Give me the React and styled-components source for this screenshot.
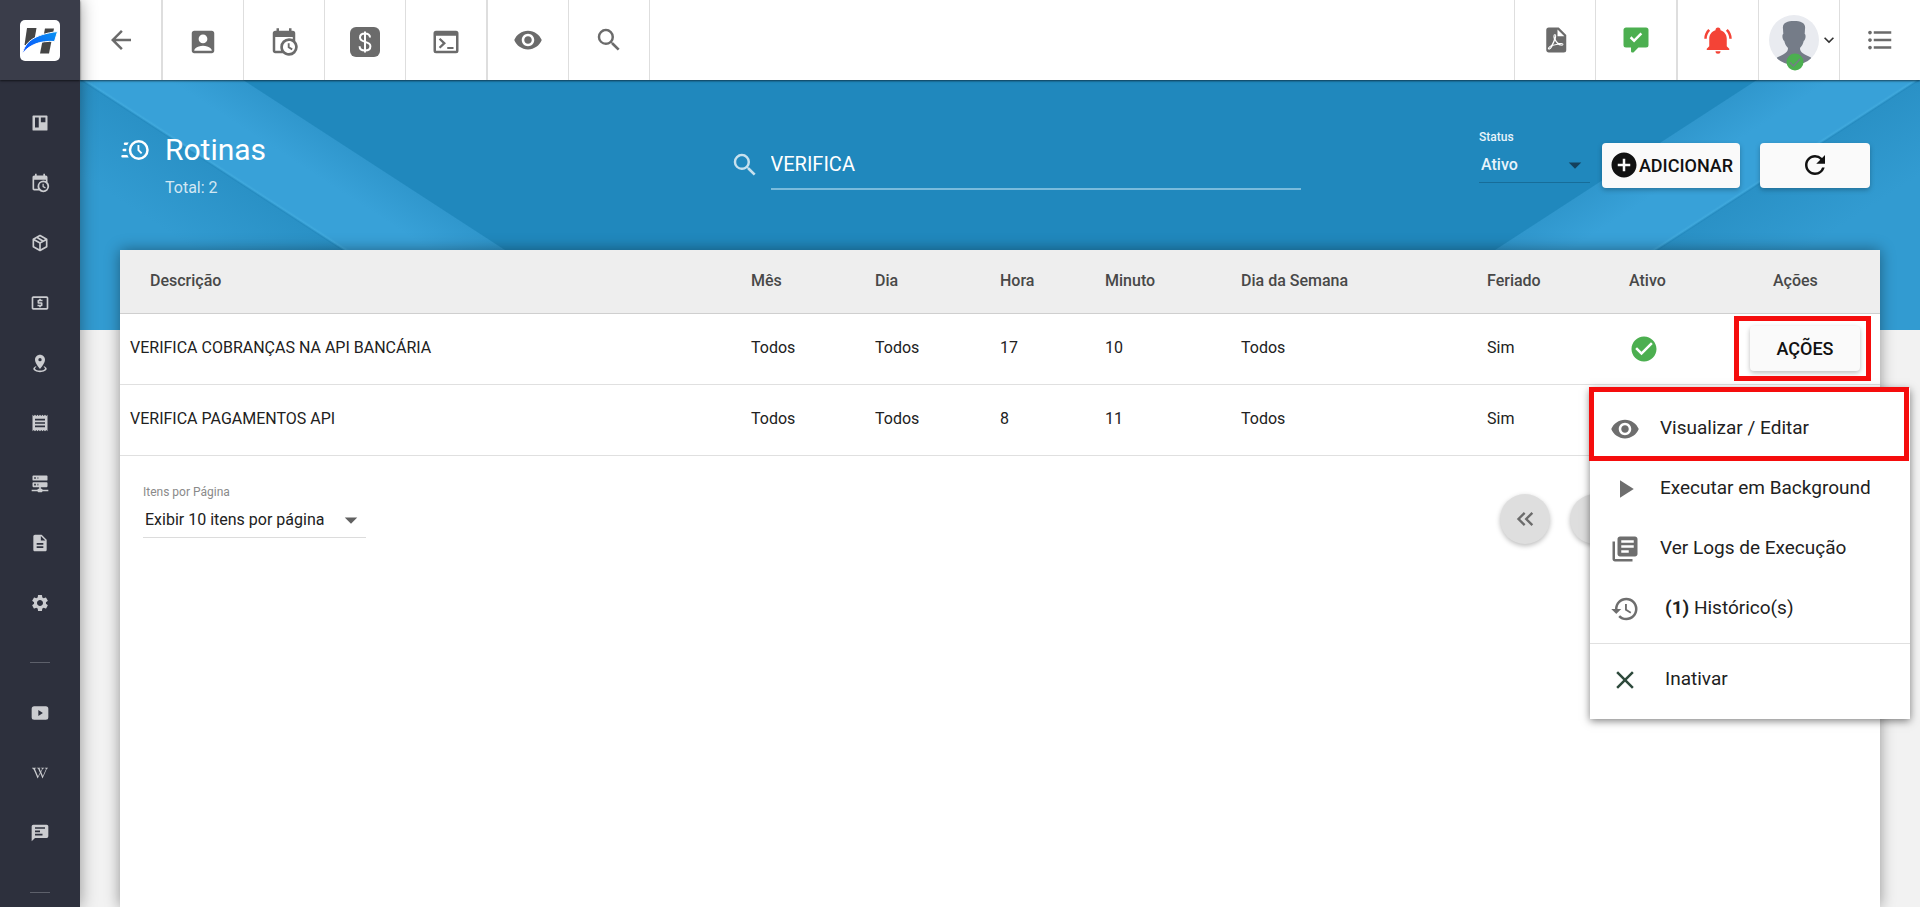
import styled, { createGlobalStyle, css } from "styled-components";
import {
  MdAccountBox,
  MdAddCircle,
  MdArrowBack,
  MdArrowDropDown,
  MdCheckCircle,
  MdClose,
  MdDescription,
  MdFormatListBulleted,
  MdHistory,
  MdKeyboardArrowDown,
  MdKeyboardDoubleArrowLeft,
  MdLibraryBooks,
  MdLocalAtm,
  MdPlayArrow,
  MdReceipt,
  MdRefresh,
  MdSearch,
  MdSettings,
  MdVisibility,
} from "react-icons/md";
import { FaWikipediaW } from "react-icons/fa";

const PATHS = {
  board:
    "M4,3H20A1,1 0 0,1 21,4V20A1,1 0 0,1 20,21H4A1,1 0 0,1 3,20V4A1,1 0 0,1 4,3M6,5.5V17.5H10.5V5.5H6M13,5.5V11H18.5V5.5H13Z",
  calendarClock:
    "M15,13H16.5V15.82L18.94,17.23L18.19,18.53L15,16.69V13M19,8H5V19H9.67C9.24,18.09 9,17.07 9,16A7,7 0 0,1 16,9C17.07,9 18.09,9.24 19,9.67V8M5,21C3.89,21 3,20.1 3,19V5C3,3.89 3.89,3 5,3H6V1H8V3H16V1H18V3H19A2,2 0 0,1 21,5V11.1C22.24,12.36 23,14.09 23,16A7,7 0 0,1 16,23C14.09,23 12.36,22.24 11.1,21H5M16,11.15A4.85,4.85 0 0,0 11.15,16C11.15,18.68 13.32,20.85 16,20.85A4.85,4.85 0 0,0 20.85,16C20.85,13.32 18.68,11.15 16,11.15Z",
  box: "M21,16.5C21,16.88 20.79,17.21 20.47,17.38L12.57,21.82C12.41,21.94 12.21,22 12,22C11.79,22 11.59,21.94 11.43,21.82L3.53,17.38C3.21,17.21 3,16.88 3,16.5V7.5C3,7.12 3.21,6.79 3.53,6.62L11.43,2.18C11.59,2.06 11.79,2 12,2C12.21,2 12.41,2.06 12.57,2.18L20.47,6.62C20.79,6.79 21,7.12 21,7.5V16.5M12,4.15L10.11,5.22L16,8.61L17.96,7.5L12,4.15M6.04,7.5L12,10.85L13.96,9.75L8.08,6.35L6.04,7.5M5,15.91L11,19.29V12.58L5,9.21V15.91M19,15.91V9.21L13,12.58V19.29L19,15.91Z",
  marker:
    "M12,2C15.31,2 18,4.66 18,7.95C18,12.41 12,19 12,19C12,19 6,12.41 6,7.95C6,4.66 8.69,2 12,2M12,6A2,2 0 0,0 10,8A2,2 0 0,0 12,10A2,2 0 0,0 14,8A2,2 0 0,0 12,6M20,19C20,21.21 16.42,23 12,23C7.58,23 4,21.21 4,19C4,17.71 5.22,16.56 7.11,15.83L7.75,16.74C6.67,17.19 6,17.81 6,18.5C6,19.88 8.69,21 12,21C15.31,21 18,19.88 18,18.5C18,17.81 17.33,17.19 16.25,16.74L16.89,15.83C18.78,16.56 20,17.71 20,19Z",
  server:
    "M13,19H14A1,1 0 0,1 15,20H22V22H15A1,1 0 0,1 14,23H10A1,1 0 0,1 9,22H2V20H9A1,1 0 0,1 10,19H11V17H4A1,1 0 0,1 3,16V12A1,1 0 0,1 4,11H20A1,1 0 0,1 21,12V16A1,1 0 0,1 20,17H13V19M4,3H20A1,1 0 0,1 21,4V8A1,1 0 0,1 20,9H4A1,1 0 0,1 3,8V4A1,1 0 0,1 4,3M9,7H10V5H9V7M9,15H10V13H9V15M5,5V7H7V5H5M5,13V15H7V13H5Z",
  video:
    "M5,4H19A3,3 0 0,1 22,7V17A3,3 0 0,1 19,20H5A3,3 0 0,1 2,17V7A3,3 0 0,1 5,4M10,8.5V15.5L15.5,12L10,8.5Z",
  message:
    "M4,2H20A2,2 0 0,1 22,4V16A2,2 0 0,1 20,18H6L2,22V4A2,2 0 0,1 4,2M6,5V7H18V5H6M6,9V11H12V9H6M6,13V15H15V13H6Z",
  clockFast:
    "M15,4A8,8 0 0,1 23,12A8,8 0 0,1 15,20A8,8 0 0,1 7,12A8,8 0 0,1 15,4M15,6A6,6 0 0,0 9,12A6,6 0 0,0 15,18A6,6 0 0,0 21,12A6,6 0 0,0 15,6M14,8H15.5V11.78L17.83,14.11L16.77,15.17L14,12.4V8M2,18A1,1 0 0,1 1,17A1,1 0 0,1 2,16H5.83C6.14,16.71 6.54,17.38 7,18H2M3,13A1,1 0 0,1 2,12A1,1 0 0,1 3,11H5.05L5,12L5.05,13H3M4,8A1,1 0 0,1 3,7A1,1 0 0,1 4,6H7C6.54,6.62 6.14,7.29 5.83,8H4Z",
  terminal:
    "M4,3H20A2,2 0 0,1 22,5V19A2,2 0 0,1 20,21H4A2,2 0 0,1 2,19V5A2,2 0 0,1 4,3M4,7V19H20V7H4M7.5,8.8L12,13L7.5,17.2L6.2,16L9.3,13L6.2,10L7.5,8.8M13,16H18V17.6H13V16Z",
  pdf: "M14,9H19.5L14,3.5V9M7,2H15L21,8V20A2,2 0 0,1 19,22H7C5.89,22 5,21.1 5,20V4A2,2 0 0,1 7,2M11.93,12.44C12.34,13.34 12.86,14.08 13.46,14.59L13.87,14.91C13,15.07 11.8,15.35 10.53,15.84V15.84L10.42,15.88L10.92,14.84C11.37,13.97 11.7,13.18 11.93,12.44M18.41,16.25C18.59,16.07 18.68,15.84 18.69,15.59C18.72,15.39 18.67,15.2 18.57,15.04C18.28,14.57 17.53,14.35 16.29,14.35L15,14.42L14.13,13.84C13.5,13.32 12.93,12.41 12.53,11.28L12.57,11.14C12.9,9.81 13.21,8.2 12.55,7.54C12.39,7.38 12.17,7.3 11.94,7.3H11.7C11.33,7.3 11,7.69 10.91,8.07C10.54,9.4 10.76,10.13 11.13,11.34V11.35C10.88,12.23 10.56,13.25 10.05,14.28L9.09,16.08L8.2,16.57C7,17.32 6.43,18.16 6.32,18.69C6.28,18.88 6.3,19.05 6.37,19.23L6.4,19.28L6.88,19.59L7.32,19.7C8.13,19.7 9.05,18.75 10.29,16.63L10.47,16.56C11.5,16.23 12.78,16 14.5,15.81C15.53,16.32 16.74,16.55 17.5,16.55C17.94,16.55 18.24,16.44 18.41,16.25M18,15.54L18.09,15.65C18.08,15.75 18.05,15.76 18,15.78H17.96L17.77,15.8C17.31,15.8 16.6,15.61 15.87,15.29C15.96,15.19 16,15.19 16.1,15.19C17.5,15.19 17.9,15.44 18,15.54M8.83,17C8.18,18.19 7.59,18.85 7.14,19C7.19,18.62 7.64,17.96 8.35,17.31L8.83,17M11.85,10.09C11.62,9.19 11.61,8.46 11.78,8.04L11.85,7.92L12,7.97C12.17,8.21 12.19,8.53 12.09,9.07L12.06,9.23L11.9,10.05L11.85,10.09Z",
  commentCheck:
    "M9,22A1,1 0 0,1 8,21V18H4A2,2 0 0,1 2,16V4C2,2.89 2.9,2 4,2H20A2,2 0 0,1 22,4V16A2,2 0 0,1 20,18H13.9L10.2,21.71C10,21.9 9.75,22 9.5,22H9M10.47,14L17,7.41L15.6,6L10.47,11.18L8.4,9.09L7,10.5L10.47,14Z",
  bellRing:
    "M21,19V20H3V19L5,17V11C5,7.9 7.03,5.17 10,4.29C10,4.19 10,4.1 10,4A2,2 0 0,1 12,2A2,2 0 0,1 14,4C14,4.1 14,4.19 14,4.29C16.97,5.17 19,7.9 19,11V17L21,19M14,21A2,2 0 0,1 12,23A2,2 0 0,1 10,21M19.75,3.19L18.33,4.61C20.04,6.3 21,8.6 21,11H23C23,8.07 21.84,5.25 19.75,3.19M1,11H3C3,8.6 3.96,6.3 5.67,4.61L4.25,3.19C2.16,5.25 1,8.07 1,11Z",
};

const Icon = ({ name, size = 30 }) => (
  <svg
    width={size}
    height={size}
    viewBox="0 0 24 24"
    fill="currentColor"
    fillRule="evenodd"
    aria-hidden="true"
  >
    <path d={PATHS[name]} />
  </svg>
);

const DollarBox = () => (
  <svg width="30" height="30" viewBox="0 0 30 30" aria-hidden="true">
    <rect width="30" height="30" rx="6" fill="currentColor" />
    <path
      d="M15 4.500v21M20 10.500c0-2.600-2-4-5-4s-5 1.500-5 4.100c0 5.800 10.400 2.800 10.400 8.600 0 2.800-2.300 4.300-5.400 4.300s-5.400-1.500-5.400-4.300"
      fill="none"
      stroke="#fff"
      strokeWidth="2"
    />
  </svg>
);

const Logo = () => (
  <svg width="40" height="41" viewBox="0 0 40 41" aria-hidden="true">
    <defs>
      <linearGradient id="swoosh" x1="0" y1="1" x2="1" y2="0">
        <stop offset="0" stopColor="#0a4fff" />
        <stop offset="1" stopColor="#0a94f0" />
      </linearGradient>
    </defs>
    <rect width="40" height="41" rx="5" fill="#fff" />
    <path d="M7 8h9.500l-3 17h-9z" fill="#454545" />
    <path d="M25 8.500h9l-5 25h-9z" fill="#454545" />
    <path
      d="M2.500 33.500C5 22 14 14.500 37.500 11.500L34.500 21.500C20 20.500 9 25 2.500 33.500z"
      fill="url(#swoosh)"
      stroke="#fff"
      strokeWidth="1"
    />
  </svg>
);

const AvatarPicture = () => (
  <svg width="50" height="56" viewBox="0 0 50 56" aria-hidden="true">
    <defs>
      <clipPath id="face">
        <circle cx="25" cy="25" r="25" />
      </clipPath>
    </defs>
    <circle cx="25" cy="25" r="25" fill="#e9ebf0" />
    <path
      d="M14 14C13 8 18 6 25 6s12 2 11 8l-.3 5c1.500.5 1 6-1 7-.5 3-2 5-3.700 7 0 5 4 6 11 9.500V52H8V42.500C15 39 19 38 19 33c-1.700-2-3.200-4-3.700-7-2-1-2.500-6.500-1-7z"
      fill="#757c88"
      clipPath="url(#face)"
    />
    <circle cx="26" cy="47" r="8.500" fill="#4caf50" />
    <path
      d="M21 47.500l3.500 3.500 6.500-7"
      fill="none"
      stroke="#757c88"
      strokeWidth="1.500"
    />
  </svg>
);

const navItems = [
  { label: "Painel", icon: <Icon name="board" size={20} /> },
  { label: "Agenda", icon: <Icon name="calendarClock" size={20} /> },
  { label: "Produtos", icon: <Icon name="box" size={20} /> },
  { label: "Financeiro", icon: <MdLocalAtm /> },
  { label: "Mapa", icon: <Icon name="marker" size={20} /> },
  { label: "Notas", icon: <MdReceipt /> },
  { label: "Servidores", icon: <Icon name="server" size={20} /> },
  { label: "Documentos", icon: <MdDescription /> },
  { label: "Configurações", icon: <MdSettings /> },
];

const helpItems = [
  { label: "Vídeos", icon: <Icon name="video" size={20} /> },
  { label: "Wiki", icon: <FaWikipediaW size={16} /> },
  { label: "Mensagens", icon: <Icon name="message" size={20} /> },
];

const rows = [
  {
    description: "VERIFICA COBRANÇAS NA API BANCÁRIA",
    month: "Todos",
    day: "Todos",
    hour: 17,
    minute: 10,
    weekday: "Todos",
    holiday: "Sim",
    open: true,
  },
  {
    description: "VERIFICA PAGAMENTOS API",
    month: "Todos",
    day: "Todos",
    hour: 8,
    minute: 11,
    weekday: "Todos",
    holiday: "Sim",
  },
];

const ActionsMenu = () => (
  <Menu role="menu">
    <MenuItem role="menuitem" $marked>
      <MdVisibility />
      <span>Visualizar / Editar</span>
    </MenuItem>
    <MenuItem role="menuitem">
      <MdPlayArrow />
      <span>Executar em Background</span>
    </MenuItem>
    <MenuItem role="menuitem">
      <MdLibraryBooks />
      <span>Ver Logs de Execução</span>
    </MenuItem>
    <MenuItem role="menuitem" $indent>
      <MdHistory />
      <span>
        <b>(1)</b> Histórico(s)
      </span>
    </MenuItem>
    <MenuDivider />
    <MenuItem role="menuitem" $indent $dark>
      <MdClose />
      <span>Inativar</span>
    </MenuItem>
  </Menu>
);

const Sidebar = () => (
  <Side>
    <LogoLink href="#" aria-label="Início">
      <Logo />
    </LogoLink>
    <Nav>
      {navItems.map((item) => (
        <NavLink key={item.label} href="#" aria-label={item.label}>
          {item.icon}
        </NavLink>
      ))}
      <NavDivider />
      {helpItems.map((item) => (
        <NavLink key={item.label} href="#" aria-label={item.label}>
          {item.icon}
        </NavLink>
      ))}
      <NavDivider />
    </Nav>
  </Side>
);

const Toolbar = () => (
  <Bar>
    <BarGroup>
      <BarButton aria-label="Voltar" $strong>
        <MdArrowBack />
      </BarButton>
    </BarGroup>
    <BarGroup $low>
      <BarButton aria-label="Clientes">
        <MdAccountBox />
      </BarButton>
      <BarButton aria-label="Agenda">
        <Icon name="calendarClock" />
      </BarButton>
      <BarButton aria-label="Financeiro">
        <DollarBox />
      </BarButton>
      <BarButton aria-label="Terminal" $strong>
        <Icon name="terminal" />
      </BarButton>
    </BarGroup>
    <BarGroup>
      <BarButton aria-label="Visualizar">
        <MdVisibility />
      </BarButton>
      <BarButton aria-label="Pesquisar">
        <MdSearch />
      </BarButton>
    </BarGroup>
    <BarGroup $end>
      <BarButton aria-label="Relatórios">
        <Icon name="pdf" />
      </BarButton>
      <BarButton aria-label="Tarefas" $color="#4caf50" $strong>
        <Icon name="commentCheck" />
      </BarButton>
      <BarButton aria-label="Notificações" $color="#f44336">
        <Icon name="bellRing" />
      </BarButton>
      <BarButton aria-label="Usuário" $user>
        <AvatarPicture />
        <MdKeyboardArrowDown />
      </BarButton>
      <BarButton aria-label="Menu" $last>
        <MdFormatListBulleted />
      </BarButton>
    </BarGroup>
  </Bar>
);

const App = () => {
  return (
    <>
      <GlobalStyle />
      <Page>
        <Sidebar />
        <Main>
          <Toolbar />
          <Content>
            <Header>
              <Title>
                <Icon name="clockFast" />
                <div>
                  <h1>Rotinas</h1>
                  <p>Total: 2</p>
                </div>
              </Title>
              <Search>
                <MdSearch />
                <input aria-label="Pesquisar" defaultValue="VERIFICA" />
              </Search>
              <Filters>
                <StatusField>
                  <label htmlFor="status">Status</label>
                  <SelectBox>
                    <select id="status">
                      <option>Ativo</option>
                      <option>Inativo</option>
                    </select>
                    <MdArrowDropDown />
                  </SelectBox>
                </StatusField>
                <Button $wide>
                  <MdAddCircle />
                  ADICIONAR
                </Button>
                <Button aria-label="Atualizar">
                  <MdRefresh />
                </Button>
              </Filters>
            </Header>
            <Card>
              <Table>
                <colgroup>
                  <col />
                  <col width="124" />
                  <col width="125" />
                  <col width="105" />
                  <col width="136" />
                  <col width="246" />
                  <col width="142" />
                  <col width="121" />
                  <col width="140" />
                </colgroup>
                <thead>
                  <tr>
                    <th>Descrição</th>
                    <th>Mês</th>
                    <th>Dia</th>
                    <th>Hora</th>
                    <th>Minuto</th>
                    <th>Dia da Semana</th>
                    <th>Feriado</th>
                    <th>Ativo</th>
                    <th>Ações</th>
                  </tr>
                </thead>
                <tbody>
                  {rows.map((row) => (
                    <tr key={row.description}>
                      <td>{row.description}</td>
                      <td>{row.month}</td>
                      <td>{row.day}</td>
                      <td>{row.hour}</td>
                      <td>{row.minute}</td>
                      <td>{row.weekday}</td>
                      <td>{row.holiday}</td>
                      <td className="active">
                        <MdCheckCircle />
                      </td>
                      <td>
                        {row.open && (
                          <Actions>
                            <Button>AÇÕES</Button>
                            <Marker />
                            <ActionsMenu />
                          </Actions>
                        )}
                      </td>
                    </tr>
                  ))}
                </tbody>
              </Table>
              <Footer>
                <PerPage>
                  <label htmlFor="per-page">Itens por Página</label>
                  <SelectBox>
                    <select id="per-page">
                      <option>Exibir 10 itens por página</option>
                      <option>Exibir 25 itens por página</option>
                    </select>
                    <MdArrowDropDown />
                  </SelectBox>
                </PerPage>
                <Pager>
                  <button aria-label="Primeira página">
                    <MdKeyboardDoubleArrowLeft />
                  </button>
                  <button aria-label="Página anterior" />
                  <button aria-label="Página atual" />
                  <button aria-label="Próxima página" />
                  <button aria-label="Última página" />
                </Pager>
              </Footer>
            </Card>
          </Content>
        </Main>
      </Page>
    </>
  );
};

export default App;

const GlobalStyle = createGlobalStyle`
  * {
    box-sizing: border-box;
  }
  body {
    margin: 0;
    font-family: Roboto, "Liberation Sans", sans-serif;
    font-size: 16px;
    color: #212121;
    background-color: #f2f2f2;
  }
  button, input, select {
    font-family: inherit;
    font-size: inherit;
    color: inherit;
  }
  button {
    cursor: pointer;
  }
`;

const Page = styled.div`
  display: flex;
  height: 100vh;
  overflow: hidden;
`;

const Side = styled.aside`
  position: relative;
  z-index: 3;
  flex: none;
  width: 80px;
  background-color: #2d303d;
  box-shadow: 0 0 16px rgba(0, 0, 0, 0.4);
`;

const LogoLink = styled.a`
  display: flex;
  align-items: center;
  justify-content: center;
  height: 80px;
  background-color: #3a3d4a;
  box-shadow: 0 1px 2px rgba(0, 0, 0, 0.6);
`;

const Nav = styled.nav`
  display: flex;
  flex-direction: column;
  padding-top: 13px;
`;

const NavLink = styled.a`
  display: flex;
  align-items: center;
  justify-content: center;
  height: 60px;
  color: #cbccd0;
  font-size: 20px;
`;

const NavDivider = styled.hr`
  width: 20px;
  height: 1px;
  margin: 29px auto 20px;
  border: 0;
  background-color: #5d606b;
`;

const Main = styled.main`
  display: flex;
  flex: 1;
  flex-direction: column;
  min-width: 0;
`;

const Bar = styled.header`
  position: relative;
  z-index: 2;
  display: flex;
  flex: none;
  height: 80px;
  padding-left: 1px;
  background-color: #fff;
  box-shadow: 0 1px 2px rgba(0, 0, 0, 0.6);
`;

const BarButton = styled.button`
  display: flex;
  align-items: center;
  justify-content: center;
  width: ${(props) => (props.$strong ? "82px" : "81px")};
  padding: 0;
  border: 0;
  border-right: ${(props) => (props.$strong ? "2px" : "1px")} solid #dedede;
  background: none;
  color: ${(props) => props.$color || "#6b6b6b"};
  font-size: 30px;
  ${(props) =>
    props.$last &&
    css`
      width: 80px;
      border-right: 0;
    `}
  ${(props) =>
    props.$user &&
    css`
      padding-top: 6px;
      padding-left: 10px;
      color: #333;
      font-size: 20px;
      > svg:last-child {
        margin-bottom: 6px;
      }
    `}
`;

const BarGroup = styled.div`
  display: flex;
  ${(props) =>
    props.$low &&
    css`
      ${BarButton} {
        padding-top: 4px;
      }
    `}
  ${(props) =>
    props.$end &&
    css`
      margin-left: auto;
      border-left: 1px solid #dedede;
    `}
`;

const Content = styled.div`
  display: flex;
  flex: 1;
  flex-direction: column;
  padding: 0 40px;
  background-image: linear-gradient(
      33deg,
      #329bd1 130px,
      #2a91c6 209px,
      #248abf 210px,
      #40a9dd 212px,
      #38a1d8 214px,
      #38a1d8 258px,
      #3097cd 298px,
      transparent 299px
    ),
    linear-gradient(
      -33deg,
      #329bd1 130px,
      #2a91c6 209px,
      #248abf 210px,
      #40a9dd 212px,
      #38a1d8 214px,
      #38a1d8 258px,
      #3097cd 298px,
      transparent 299px
    ),
    linear-gradient(#2088bd, #2088bd);
  background-position: left top, right top, left top;
  background-repeat: no-repeat;
  background-size: 600px 250px, 600px 250px, 100% 250px;
`;

const Header = styled.section`
  display: grid;
  grid-template-columns: 70fr 65fr 65fr;
  align-items: center;
  height: 170px;
  padding-right: 10px;
`;

const Title = styled.div`
  display: flex;
  gap: 15px;
  color: #fff;
  > svg {
    margin-top: 5px;
  }
  h1 {
    margin: 0;
    font-size: 30px;
    font-weight: 400;
    line-height: 40px;
  }
  p {
    margin: 6px 0 0;
    line-height: 24px;
    color: rgba(255, 255, 255, 0.8);
  }
`;

const Search = styled.div`
  display: flex;
  align-items: center;
  gap: 11px;
  margin-left: -3px;
  font-size: 30px;
  color: rgba(255, 255, 255, 0.75);
  input {
    flex: 1;
    min-width: 0;
    height: 50px;
    padding: 0;
    border: 0;
    border-bottom: 2px solid #79bbdc;
    outline: 0;
    background: none;
    color: #fff;
    font-size: 20px;
  }
`;

const Filters = styled.div`
  display: flex;
  align-items: center;
  justify-content: flex-end;
`;

const SelectBox = styled.div`
  display: grid;
  align-items: center;
  select,
  svg {
    grid-area: 1 / 1;
  }
  select {
    width: 100%;
    height: 36px;
    padding: 0 2px;
    border: 0;
    border-bottom: 1px solid #dcdcdc;
    outline: 0;
    background: none;
    appearance: none;
  }
  svg {
    justify-self: end;
    font-size: 30px;
    color: #616161;
    pointer-events: none;
  }
`;

const StatusField = styled.div`
  width: 111px;
  margin-right: 12px;
  padding-bottom: 20px;
  color: #e8f4fb;
  font-weight: 500;
  label {
    display: block;
    font-size: 12px;
    line-height: 20px;
  }
  select {
    border-color: #176d99;
    font-weight: 500;
  }
  svg {
    color: #14405c;
  }
`;

const Button = styled.button`
  display: flex;
  align-items: center;
  justify-content: center;
  width: ${(props) => (props.$wide ? "138px" : "110px")};
  height: 45px;
  padding: 0;
  border: 0;
  border-radius: 4px;
  background-color: #fafafa;
  box-shadow: 0 2px 5px rgba(0, 0, 0, 0.26);
  color: #111;
  font-size: 18px;
  font-weight: 500;
  svg {
    flex: none;
    font-size: 30px;
  }
  & + & {
    margin-left: 20px;
  }
`;

const Card = styled.section`
  flex: 1;
  background-color: #fff;
  box-shadow: 0 0 14px rgba(0, 0, 0, 0.4);
`;

const Table = styled.table`
  width: 100%;
  border-collapse: collapse;
  table-layout: fixed;
  th,
  td {
    padding: 0 10px;
    text-align: left;
  }
  th {
    height: 63px;
    padding-bottom: 1px;
    border-bottom: 1px solid #cfcfcf;
    background-color: #eee;
    color: #484848;
    font-weight: 500;
    &:first-child {
      padding-left: 30px;
    }
    &:last-child {
      padding-left: 33px;
    }
  }
  td {
    height: 71px;
    padding-bottom: 2px;
    border-bottom: 1px solid #e0e0e0;
    &:last-child {
      padding-bottom: 0;
    }
  }
  .active {
    padding-bottom: 0;
    color: #4caf50;
    font-size: 30px;
    svg {
      display: block;
    }
  }
`;

const Actions = styled.div`
  position: relative;
`;

// red frame that points at the control under it
const Marker = styled.span`
  position: absolute;
  inset: -10px -1px -10px -16px;
  border: 5px solid #f50d0d;
  pointer-events: none;
`;

const Menu = styled.div`
  position: absolute;
  z-index: 1;
  top: 62px;
  right: -40px;
  width: 320px;
  padding: 10px 0;
  background-color: #fff;
  box-shadow: 0 2px 8px rgba(0, 0, 0, 0.5);
`;

const MenuItem = styled.button`
  position: relative;
  display: flex;
  align-items: center;
  gap: 20px;
  width: 100%;
  height: 60px;
  padding: 0 20px;
  border: 0;
  background: none;
  font-size: 19px;
  text-align: left;
  svg {
    flex: none;
    margin-top: 2px;
    font-size: 30px;
    color: ${(props) => (props.$dark ? "#2e4a3c" : "#6e6e6e")};
  }
  span {
    padding-bottom: 2px;
  }
  b {
    font-weight: 700;
  }
  ${(props) =>
    props.$indent &&
    css`
      gap: 25px;
    `}
  ${(props) =>
    props.$marked &&
    css`
      &::after {
        content: "";
        position: absolute;
        inset: -11px 1px -3px -1px;
        border: 5px solid #f50d0d;
      }
    `}
`;

const MenuDivider = styled.hr`
  height: 1px;
  margin: 5px 0;
  border: 0;
  background-color: #e0e0e0;
`;

const Footer = styled.footer`
  display: flex;
  justify-content: space-between;
  padding: 26px 50px 0 23px;
`;

const PerPage = styled.div`
  width: 223px;
  label {
    display: block;
    color: #8a8a8a;
    font-size: 12px;
    line-height: 20px;
  }
`;

const Pager = styled.div`
  display: flex;
  gap: 20px;
  padding-top: 12px;
  button {
    display: flex;
    align-items: center;
    justify-content: center;
    width: 50px;
    height: 50px;
    padding: 0;
    border: 0;
    border-radius: 50%;
    background-color: #dedede;
    box-shadow: 0 2px 5px rgba(0, 0, 0, 0.26);
    color: #6b6b6b;
    font-size: 28px;
  }
`;
